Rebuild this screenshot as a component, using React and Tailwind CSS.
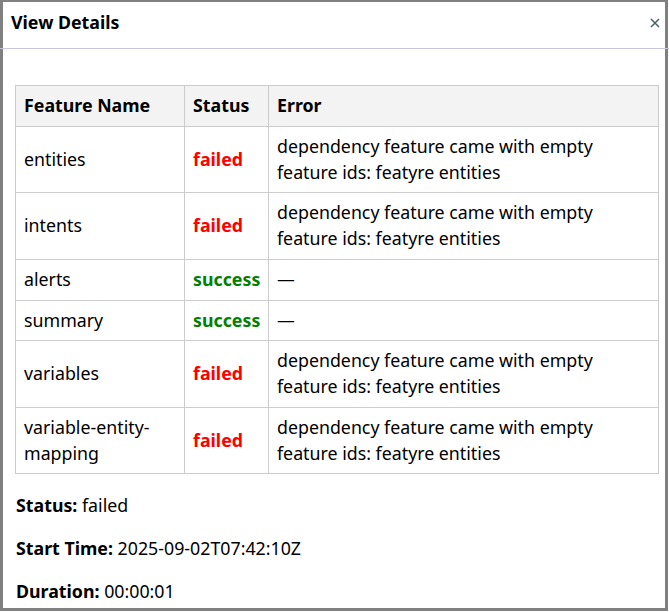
import React from "react";

const rows = [
  { name: "entities", status: "failed", error: "dependency feature came with empty feature ids: featyre entities" },
  { name: "intents", status: "failed", error: "dependency feature came with empty feature ids: featyre entities" },
  { name: "alerts", status: "success", error: "—" },
  { name: "summary", status: "success", error: "—" },
  { name: "variables", status: "failed", error: "dependency feature came with empty feature ids: featyre entities" },
  { name: "variable-entity-mapping", status: "failed", error: "dependency feature came with empty feature ids: featyre entities" },
];

export default function App() {
  return (
    <div
      className="w-[669px] h-[612px] bg-white text-black"
      style={{ fontFamily: '"Noto Sans", "Open Sans", sans-serif' }}
    >
      <div className="w-[668px] h-[611px] border-t-2 border-x-[3px] border-b-[3px] border-[#808080] bg-white">
        <div className="h-[46px] flex items-center justify-between pl-[8px] pr-[5px] pb-[6px]">
          <div className="text-[17.8px] font-bold leading-[24px]">View Details</div>
          <svg width="10" height="10" viewBox="0 0 10 10" className="mt-[1px]">
            <path d="M1 1 L9 9 M9 1 L1 9" stroke="#4b5f6b" strokeWidth="1.5" />
          </svg>
        </div>
        <div className="h-px bg-[#c8c6dc] -ml-[3px] -mr-[4px]"></div>
        <div className="pt-[36px] pl-[12px]">
          <table className="border-collapse w-[643px] text-[17.8px] leading-[25.75px] table-fixed">
            <colgroup>
              <col className="w-[169px]" />
              <col className="w-[84px]" />
              <col className="w-[390px]" />
            </colgroup>
            <thead>
              <tr className="bg-[#f3f3f3]">
                <th className="border border-[#cccccc] px-2 py-[7px] text-left font-bold">Feature Name</th>
                <th className="border border-[#cccccc] px-2 py-[7px] text-left font-bold">Status</th>
                <th className="border border-[#cccccc] px-2 py-[7px] text-left font-bold">Error</th>
              </tr>
            </thead>
            <tbody>
              {rows.map((r) => (
                <tr key={r.name}>
                  <td className="border border-[#cccccc] px-2 py-[7px] align-middle">{r.name}</td>
                  <td className="border border-[#cccccc] px-2 py-[7px] align-middle">
                    <span
                      className={
                        r.status === "failed"
                          ? "font-bold text-[#ff0000]"
                          : "font-bold text-[#008000]"
                      }
                    >
                      {r.status}
                    </span>
                  </td>
                  <td className="border border-[#cccccc] px-2 py-[7px] align-middle">{r.error}</td>
                </tr>
              ))}
            </tbody>
          </table>
          <div className="mt-[18px] flex flex-col gap-[17px] text-[17.8px] leading-[26px] pl-px">
            <div>
              <span className="font-bold">Status:</span> failed
            </div>
            <div>
              <span className="font-bold">Start Time:</span> 2025-09-02T07:42:10Z
            </div>
            <div>
              <span className="font-bold">Duration:</span> 00:00:01
            </div>
          </div>
        </div>
      </div>
    </div>
  );
}
